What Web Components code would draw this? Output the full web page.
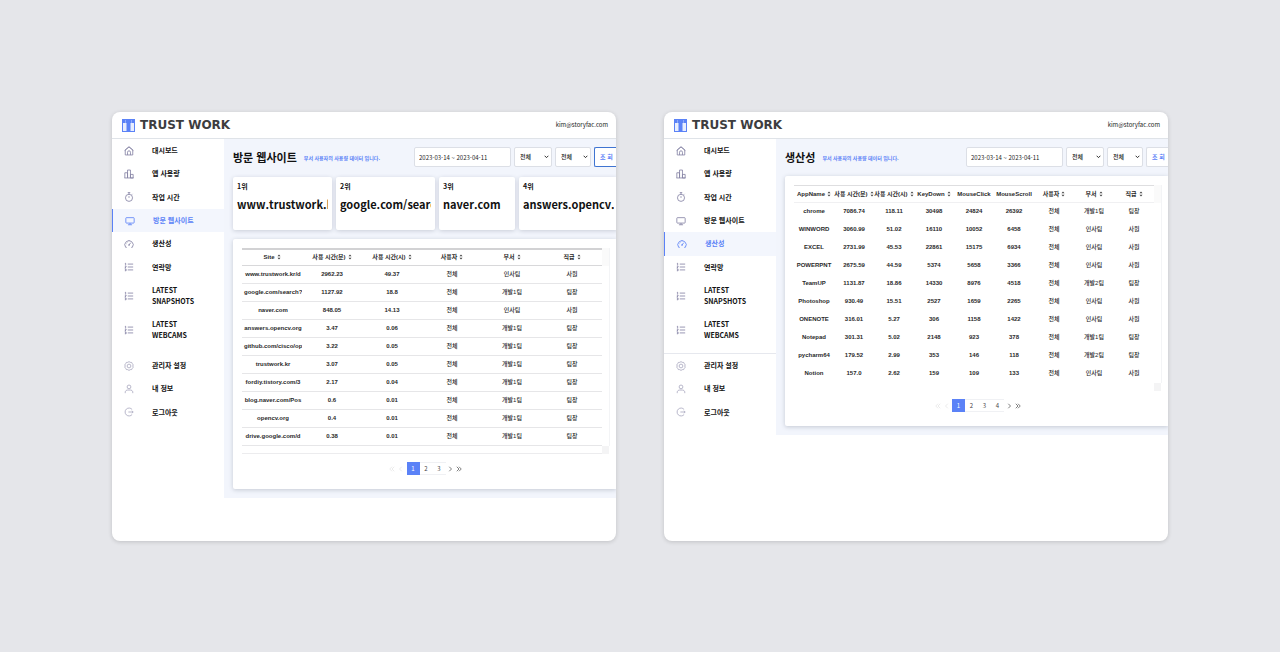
<!DOCTYPE html>
<html lang="ko">
<head>
<meta charset="utf-8">
<meta name="viewport" content="width=device-width, initial-scale=1">
<title>TRUST WORK</title>
<style>
  body {
    margin: 0;
    background: #e5e6ea;
    color: #111;
    font-family: "Noto Sans CJK KR", "Noto Sans", sans-serif;
    font-size: 6px;
  }
</style>
</head>
<body>
<tw-board>
  <tw-screen user="kim@storyfac.com" active="3">
    <tw-page-head heading="방문 웹사이트" note="부서 사용자의 사용량 데이터 입니다." focused></tw-page-head>
    <tw-rank-list>
      <tw-rank-card rank="1위">www.trustwork.kr</tw-rank-card>
      <tw-rank-card rank="2위">google.com/search</tw-rank-card>
      <tw-rank-card rank="3위" compact>naver.com</tw-rank-card>
      <tw-rank-card rank="4위">answers.opencv.org</tw-rank-card>
    </tw-rank-list>
    <tw-panel>
      <tw-data-table source="sites" lined></tw-data-table>
      <tw-pager pages="3"></tw-pager>
    </tw-panel>
  </tw-screen>
  <tw-screen user="kim@storyfac.com" active="4" divided>
    <tw-page-head heading="생산성" note="부서 사용자의 사용량 데이터 입니다."></tw-page-head>
    <tw-panel>
      <tw-data-table source="apps"></tw-data-table>
      <tw-pager pages="4"></tw-pager>
    </tw-panel>
  </tw-screen>
</tw-board>

<script>
const DATA = {
  sites: {
    columns: ["Site", "사용 시간(분)", "사용 시간(시)", "사용자", "부서", "직급"],
    width: 60,
    rows: [
      ["www.trustwork.kr/d", "2962.23", "49.37", "전체", "인사팀", "사원"],
      ["google.com/search?", "1127.92", "18.8", "전체", "개발1팀", "팀장"],
      ["naver.com", "848.05", "14.13", "전체", "인사팀", "사원"],
      ["answers.opencv.org", "3.47", "0.06", "전체", "개발1팀", "팀장"],
      ["github.com/cisco/op", "3.22", "0.05", "전체", "개발1팀", "팀장"],
      ["trustwork.kr", "3.07", "0.05", "전체", "개발1팀", "팀장"],
      ["fordiy.tistory.com/3", "2.17", "0.04", "전체", "개발1팀", "팀장"],
      ["blog.naver.com/Pos", "0.6", "0.01", "전체", "개발1팀", "팀장"],
      ["opencv.org", "0.4", "0.01", "전체", "개발1팀", "팀장"],
      ["drive.google.com/d", "0.38", "0.01", "전체", "개발1팀", "팀장"]
    ]
  },
  apps: {
    columns: ["AppName", "사용 시간(분)", "사용 시간(시)", "KeyDown", "MouseClick", "MouseScroll", "사용자", "부서", "직급"],
    plain: ["MouseClick", "MouseScroll"],
    width: 40,
    rows: [
      ["chrome", "7086.74", "118.11", "30498", "24824", "26392", "전체", "개발1팀", "팀장"],
      ["WINWORD", "3060.99", "51.02", "16110", "10052", "6458", "전체", "인사팀", "사원"],
      ["EXCEL", "2731.99", "45.53", "22861", "15175", "6934", "전체", "인사팀", "사원"],
      ["POWERPNT", "2675.59", "44.59", "5374", "5658", "3366", "전체", "인사팀", "사원"],
      ["TeamUP", "1131.87", "18.86", "14330", "8976", "4518", "전체", "개발2팀", "팀장"],
      ["Photoshop", "930.49", "15.51", "2527", "1659", "2265", "전체", "인사팀", "사원"],
      ["ONENOTE", "316.01", "5.27", "306", "1158", "1422", "전체", "인사팀", "사원"],
      ["Notepad", "301.31", "5.02", "2148", "923", "378", "전체", "개발1팀", "팀장"],
      ["pycharm64", "179.52", "2.99", "353", "146", "118", "전체", "개발2팀", "팀장"],
      ["Notion", "157.0", "2.62", "159", "109", "133", "전체", "인사팀", "사원"]
    ]
  }
};

const ICONS = {
  home: '<path d="M3 9.500 12 2l9 7.500V21.500H3zM8.500 21.500V15a3.500 3.500 0 0 1 7 0v6.500M1.500 11 12 2l10.500 9"/>',
  usage: '<path d="M2 21.500V9h6.500v12.500M8.500 21.500V2.500h7v19M15.500 21.500V13H22v8.500zM1 21.500h22"/>',
  timer: '<circle cx="12" cy="14" r="8.500"/><path d="M9 1.500h6M12 1.500v4M12 10v4M19 6l1.500-1.500"/>',
  monitor: '<rect x="2" y="4" width="20" height="13" rx="1.500"/><path d="M7 21h10M12 17v4"/>',
  gauge: '<path d="M6.500 20H4a10 10 0 1 1 16 0h-2.500M12 14.500 16 9M12 4.500v1M5 11l1 .500M7 7l1 1"/><circle cx="12" cy="14.500" r="1"/>',
  list: '<path d="M9 5h13M9 12h13M9 19h13M2 4l2-1v5M2 10h3v2l-3 2h3M2 17h3v4H2M3 19h2"/>',
  gear: '<path d="m12 1.500 3 1.700 3.500.3 1.500 3 2 2.700-.8 2.800.8 3-2 2.500-1.500 3-3.500.3-3 1.700-3-1.700-3.500-.3-1.500-3-2-2.500.8-3L2 9.200l2-2.700 1.500-3L9 3.200z"/><circle cx="12" cy="12" r="4.500"/>',
  person: '<circle cx="12" cy="7" r="4.500"/><path d="M3 22v-2.500C3 16 6 14.500 9 14.500h6c3 0 6 1.500 6 5V22"/>',
  logout: '<path d="M19.500 6a9.500 9.500 0 1 0 0 12M10.500 12H22M19 9l3 3-3 3"/>'
};
const icon = name => `<svg viewBox="0 0 24 24" aria-hidden="true">${ICONS[name]}</svg>`;

class Base extends HTMLElement {
  constructor() { super(); this.attachShadow({ mode: "open" }); }
  connectedCallback() { this.shadowRoot.innerHTML = this.render(); }
}

customElements.define("tw-board", class extends Base {
  render() {
    return `<style>
      :host { display: grid; grid-template-columns: repeat(2, minmax(0, 1fr)); gap: 48px; padding: 112px; }
    </style><slot></slot>`;
  }
});

customElements.define("tw-screen", class extends Base {
  render() {
    return `<style>
      :host { display: flex; flex-direction: column; overflow: hidden; border-radius: 8px; background: #fff;
        padding-bottom: 43px; box-shadow: 0 1px 4px rgba(0,0,0,.16); }
      .body { display: grid; grid-template-columns: 112px minmax(0, 1fr); align-items: start; }
      main { overflow: hidden; background: #f2f5fc; padding: 0 0 9px 9px; }
    </style>
    <tw-topbar user="${this.getAttribute("user")}"></tw-topbar>
    <div class="body">
      <tw-sidebar active="${this.getAttribute("active")}" ${this.hasAttribute("divided") ? "divided" : ""}></tw-sidebar>
      <main><slot></slot></main>
    </div>`;
  }
});

customElements.define("tw-topbar", class extends Base {
  render() {
    return `<style>
      :host { display: flex; align-items: center; justify-content: space-between; height: 26px;
        padding: 0 8px 0 10px; border-bottom: 1px solid #dfe3e8; }
      a { display: flex; align-items: center; gap: 5px; color: #3d3d3f; text-decoration: none;
        font: bold 12px/14px "DejaVu Sans", sans-serif; }
      svg { width: 13px; height: 13px; }
      .user { font-size: 6px; line-height: 10px; color: #222; }
    </style>
    <a href="#"><svg viewBox="0 0 26 26" aria-hidden="true">
      <path fill="#5b82f7" d="M0 0h26v26H0z"/><path fill="#e8eefe" d="M2 8h7v16H2zM17 8h7v16h-7z"/>
      <path fill="#c3d1fc" d="M7 2h1v6H7zM18 2h1v6h-1z"/></svg><span>TRUST WORK</span></a>
    <span class="user">${this.getAttribute("user")}</span>`;
  }
});

customElements.define("tw-sidebar", class extends Base {
  render() {
    const groups = [
      ["pages", [["home", "대시보드"], ["usage", "앱 사용량"], ["timer", "작업 시간"], ["monitor", "방문 웹사이트"], ["gauge", "생산성"], ["list", "연락망"]]],
      ["latest", [["list", "LATEST SNAPSHOTS"], ["list", "LATEST WEBCAMS"]]],
      ["account", [["gear", "관리자 설정"], ["person", "내 정보"], ["logout", "로그아웃"]]]
    ];
    const active = Number(this.getAttribute("active"));
    let n = 0;
    return `<style>
      :host { display: block; background: #fff; }
      ul { list-style: none; margin: 0; padding: 0; display: grid; grid-auto-rows: 1fr; }
      .pages { min-height: 140px; }
      .latest { min-height: 68px; }
      .account { min-height: 70px; margin-top: 6px; border-top: 1px solid transparent; }
      :host([divided]) .account { border-top-color: #e6e8ee; }
      a { box-sizing: border-box; height: 100%; display: grid; grid-template-columns: 10px 48px;
        column-gap: 18px; align-items: center; padding-left: 12px; color: #111; text-decoration: none;
        font-weight: bold; font-size: 7px; line-height: 11px; }
      svg { width: 10px; height: 10px; fill: none; stroke: #8583a5; stroke-width: 2; }
      .account svg { stroke: #a9a8bf; }
      a[aria-current] { color: #5b82f7; background: #f3f6fd; border-left: 1px solid #5b82f7; }
      a[aria-current] svg { stroke: #5b82f7; }
    </style>
    <nav>${groups.map(([cls, items]) => `<ul class="${cls}">${items.map(([ic, label]) =>
      `<li><a href="#" ${n++ === active ? 'aria-current="page"' : ""}>${icon(ic)}<span>${label}</span></a></li>`).join("")}</ul>`).join("")}</nav>`;
  }
});

customElements.define("tw-page-head", class extends Base {
  render() {
    return `<style>
      :host { display: flex; align-items: center; height: 20px; padding: 8px 0 9px; }
      h1 { margin: 0; font-size: 11px; line-height: 16px; white-space: nowrap; }
      p { margin: 2px 0 0 7px; font-size: 5px; line-height: 8px; font-weight: bold; color: #5b82f7; white-space: nowrap; }
      form { display: flex; flex: none; gap: 3px; margin-left: auto; }
      input, select, button { box-sizing: border-box; height: 20px; margin: 0; border: 1px solid #dcdfe6; border-radius: 2px;
        background: #fff; color: #222; font: 6px/10px "Noto Sans CJK KR", sans-serif; }
      input { width: 97px; padding: 0 4px; }
      select { appearance: none; width: 38px; padding: 0 5px; font-weight: 500;
        background: #fff url("data:image/svg+xml,%3Csvg xmlns='http://www.w3.org/2000/svg' viewBox='0 0 8 6'%3E%3Cpath d='m1 1 3 3 3-3' fill='none' stroke='%23222' stroke-width='1.500'/%3E%3C/svg%3E") no-repeat right 2px center / 5px 4px; }
      select + select { width: 36px; }
      button { width: 22px; border-right: 0; border-radius: 2px 0 0 2px; padding: 0 0 0 5px; text-align: left;
        white-space: nowrap; color: #5b82f7; font-weight: bold; }
      :host([focused]) button { border-color: #3f74d1; }
    </style>
    <h1>${this.getAttribute("heading")}</h1><p>${this.getAttribute("note")}</p>
    <form>
      <input type="text" aria-label="기간" value="2023-03-14 ~ 2023-04-11">
      <select aria-label="부서"><option>전체</option></select>
      <select aria-label="사용자"><option>전체</option></select>
      <button type="button">조 회</button>
    </form>`;
  }
});

customElements.define("tw-rank-list", class extends Base {
  render() {
    return `<style>
      :host { display: flex; gap: 4px; padding: 1px 0 9px; margin-right: -9px; }
    </style><slot></slot>`;
  }
});

customElements.define("tw-rank-card", class extends Base {
  render() {
    return `<style>
      :host { box-sizing: border-box; flex: none; width: 99px; height: 53px; padding: 4px 4px 0; overflow: hidden;
        background: #fff; border-radius: 2px; box-shadow: 0 1px 4px rgba(60,70,90,.22); font-weight: bold; }
      :host([compact]) { width: 76px; }
      span { display: block; font-size: 7px; line-height: 10px; }
      div { margin-top: 5px; font-size: 11px; line-height: 16px; white-space: nowrap; overflow: hidden; }
    </style><span>${this.getAttribute("rank")}</span><div><slot></slot></div>`;
  }
});

customElements.define("tw-panel", class extends Base {
  render() {
    return `<style>
      :host { display: block; background: #fff; border-radius: 2px 0 0 2px; padding: 9px 9px 14px;
        box-shadow: 0 1px 4px rgba(60,70,90,.25); }
    </style><slot></slot>`;
  }
});

customElements.define("tw-data-table", class extends Base {
  render() {
    const { columns, rows, width, plain = [] } = DATA[this.getAttribute("source")];
    const sort = '<svg viewBox="0 0 4 6" aria-hidden="true"><path d="M.5 2.200 2 .5l1.500 1.700zM.5 3.800 2 5.500l1.500-1.700z"/></svg>';
    return `<style>
      :host { display: block; padding-bottom: 8px; }
      .frame { display: grid; grid-template-columns: auto 8px; justify-content: start; }
      table { table-layout: fixed; width: ${width * columns.length}px; border-collapse: separate; border-spacing: 0;
        font: bold 6px/8px "Liberation Sans", "Noto Sans CJK KR", sans-serif; color: #2a2a2a; }
      th, td { box-sizing: border-box; height: 18px; text-align: center; vertical-align: middle; white-space: nowrap;
        border-bottom: 1px solid transparent; }
      td { overflow: hidden; padding: 0 0 1px; }
      td:nth-last-child(-n+3) { font-weight: 500; }
      th { padding: 0 0 1px; border-bottom-color: #f0f0f2; border-top: 1px solid #dedee0; }
      button { all: unset; box-sizing: border-box; width: 100%; display: flex; align-items: center; justify-content: center; gap: 2px; cursor: pointer; }
      svg { width: 4px; height: 6px; fill: #444; flex: none; }
      :host([lined]) th { border-top: 2px solid #d2d2d4; border-bottom-color: #d8d8da; }
      :host([lined]) td { border-bottom-color: #e6e6e8; }
      .bar { display: flex; flex-direction: column; justify-content: space-between; border-right: 1px solid #f3f4f6; }
      .bar i { height: 8px; background: #f4f4f5; }
      .bar i:first-child { height: 18px; background: #fafafa; }
      .bar i:last-child { margin-bottom: -8px; }
      .clip { display: flex; justify-content: safe center; overflow: hidden; }
      :host([lined]) .clip { padding-left: 2px; }
      :host([lined]) .foot { height: 8px; box-sizing: border-box; border-bottom: 1px solid #ececee; margin-bottom: -8px; width: 367px; }
    </style>
    <div class="frame"><table>
      <thead><tr>${columns.map(c => `<th scope="col"><button type="button">${c}${plain.includes(c) ? "" : sort}</button></th>`).join("")}</tr></thead>
      <tbody>${rows.map(r => `<tr>${r.map((v, i) => `<td>${i ? v : `<div class="clip">${v}</div>`}</td>`).join("")}</tr>`).join("")}</tbody>
    </table><div class="bar"><i></i><i></i></div></div><div class="foot"></div>`;
  }
});

customElements.define("tw-pager", class extends Base {
  render() {
    const pages = Number(this.getAttribute("pages"));
    const arrow = (d, label) => `<button type="button" aria-label="${label}"><svg viewBox="0 0 8 8" aria-hidden="true"><path d="${d}"/></svg></button>`;
    return `<style>
      :host { display: flex; justify-content: center; align-items: center; margin-top: 8px; width: 367px; }
      button { all: unset; box-sizing: border-box; display: flex; align-items: center; justify-content: center; width: 9px; height: 13px; cursor: pointer;
        font: 6px/9px "Noto Sans CJK KR", sans-serif; color: #444; }
      .num { width: 13px; border: 1px solid #f0f1f4; border-width: 1px 0; }
      .num[aria-current] { background: #5b82f7; border-color: #5b82f7; color: #fff; }
      .prev, .next { display: flex; }
      .prev { opacity: .15; margin-right: 1px; }
      svg { width: 6px; height: 6px; fill: none; stroke: #555; stroke-width: 1; }
    </style>
    <div class="prev">${arrow("M4 1 1 4l3 3M7 1 4 4l3 3", "처음")}${arrow("M5 1 2 4l3 3", "이전")}</div>
    ${Array.from({ length: pages }, (_, i) => `<button type="button" class="num" ${i ? "" : 'aria-current="page"'}>${i + 1}</button>`).join("")}
    <div class="next">${arrow("m3 1 3 3-3 3", "다음")}${arrow("m1 1 3 3-3 3M4 1l3 3-3 3", "마지막")}</div>`;
  }
});
</script>
</body>
</html>
